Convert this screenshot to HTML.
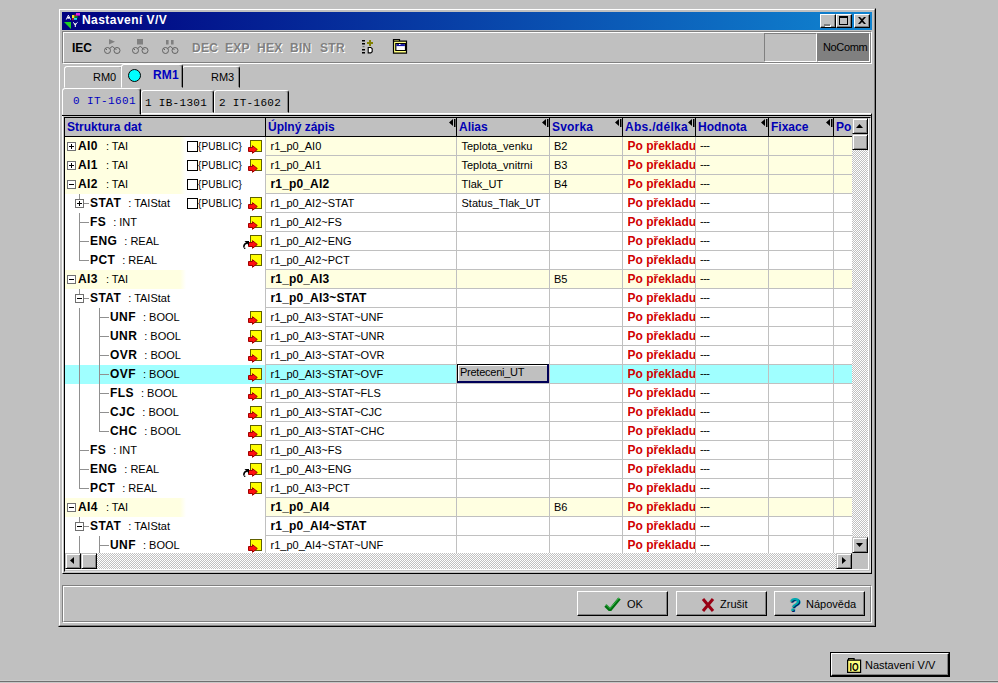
<!DOCTYPE html><html><head><meta charset="utf-8"><title>Nastavení V/V</title><style>
*{box-sizing:border-box;margin:0;padding:0}
html,body{width:998px;height:683px;overflow:hidden;background:#c0c0c0;font:11px "Liberation Sans",sans-serif;color:#000}
body{position:relative}
div,span,i,svg,b{position:absolute}
b{position:static}
#win{left:58px;top:8px;width:818px;height:619px;background:#c0c0c0;border:1px solid;border-color:#c0c0c0 #000 #000 #c0c0c0}
#win2{left:0;top:0;width:816px;height:617px;border:1px solid;border-color:#fff #808080 #808080 #fff}
#title{left:62px;top:12px;width:810px;height:18px;background:linear-gradient(90deg,#000080,#1084d0)}
#title .tt{left:20px;top:1px;font:bold 12px "Liberation Sans",sans-serif;color:#fff;letter-spacing:.45px;white-space:pre}
.capb{top:2px;width:16px;height:14px;background:#c0c0c0;border:1px solid;border-color:#fff #000 #000 #fff;box-shadow:inset -1px -1px 0 #808080}
/* toolbar */
#tb{left:62px;top:31px;width:810px;height:33px;border:1px solid;border-color:#808080 #fff #fff #808080}
#tb2{left:0;top:0;width:808px;height:31px;border:1px solid;border-color:#fff #808080 #808080 #fff}
.tbt{top:41px;font:bold 12px "Liberation Sans",sans-serif;white-space:pre;letter-spacing:.3px}
.dis{color:#808080;text-shadow:1px 1px 0 #fff}
/* tabs */
.tab{background:#c0c0c0;border:1px solid;border-color:#fff #000 transparent #fff;border-radius:3px 3px 0 0;box-shadow:inset -1px 0 0 #808080}
.tab span{white-space:pre}
/* grid */
#gridwrap{left:64px;top:117px;width:807px;height:455px;border:1px solid;border-color:#000 #dfdfdf #dfdfdf #000}
#gridwrap2{left:0;top:0;width:804px;height:452px;border:1px solid;border-color:transparent #fff #fff transparent}
#gridwrap3{left:-1px;top:-1px;width:803px;height:451px;border:1px solid;border-color:transparent #dfdfdf #dfdfdf transparent}
#grid{left:64px;top:117px;width:788px;height:436px;overflow:hidden;background:#fff}
#hdr{left:0;top:0;width:788px;height:19px;background:#c0c0c0}
#hdr .hb{top:19px;left:0;width:788px;height:1px;background:#000}
#hdr .h{top:3px;font:bold 12px "Liberation Sans",sans-serif;color:#0000b4;white-space:pre;letter-spacing:0}
#hdr .vs{top:0;width:1px;height:19px;background:#000}
#hdr .mk{top:2px;width:7px;height:8px}
.row{left:0;width:788px;height:19px;border-bottom:1px solid #c0c0c0}
.row .c0{left:0;top:0;width:201px;height:19px;background:#fff}
.row .c0y{background:linear-gradient(90deg,#ffffe1 0,#ffffe1 116px,#fff 122px)}
.row .c0s{background:#a0ffff}
.ex{z-index:2;top:5px;width:9px;height:9px;border:1px solid #707070;background:#fff}
.ex .h{left:1px;top:3px;width:5px;height:1px;background:#000}
.ex .v{left:3px;top:1px;width:1px;height:5px;background:#000}
.hl{top:9px;height:1px;background:#909090}
.vl{width:1px;background:#909090}
.nm{top:2px;white-space:pre;font:11px "Liberation Sans",sans-serif}
.nm b{font:bold 12px "Liberation Sans",sans-serif;letter-spacing:.4px}
.ty{position:static;margin-left:4px}
.cb{left:123px;top:4px;width:11px;height:11px;border:1px solid #000;background:#fff}
.pub{left:134px;top:4px;font:10px "Liberation Sans",sans-serif;letter-spacing:.15px;white-space:pre}
.ic{left:184px;top:3px;width:16px;height:14px}
.ic .sq{left:2px;top:0;width:12px;height:12px;background:#ffff00;border:1px solid #606000}
.ic .ar{left:0;top:5px}
.ic .bk{left:-5px;top:6px}
.t{top:3px;white-space:pre}
.c1{left:206.500px}.c2{left:397.500px}.c3{left:490px}.c4{left:563.500px;font:bold 12px "Liberation Sans",sans-serif;color:#d00000;top:2px;width:67.500px;overflow:hidden}.c5{left:636px;top:2px;letter-spacing:-.5px}
.fb{font:bold 12px "Liberation Sans",sans-serif;top:2px;letter-spacing:.15px}
.edit{left:393px;top:-1px;width:92px;height:19px;background:#c0c0c0;border:solid;border-width:1px 2px 2px 1px;border-color:#000 #000058 #000058 #000;box-shadow:inset 1px 1px 0 #fff;padding:1px 0 0 2px;white-space:pre;z-index:4;letter-spacing:-.25px}
.gl{top:20px;width:1px;height:416px;background:#c0c0c0}
/* scrollbars */
.chk{background-color:#fff;background-image:conic-gradient(#c0c0c0 25%,#fff 0 50%,#c0c0c0 0 75%,#fff 0);background-size:2px 2px}
.sbtn{background:#c0c0c0;border:1px solid;border-color:#c0c0c0 #000 #000 #c0c0c0;box-shadow:inset 1px 1px 0 #fff,inset -1px -1px 0 #808080}
.btn{background:#c0c0c0;border:1px solid;border-color:#fff #000 #000 #fff;box-shadow:inset -1px -1px 0 #808080}
.btn .lb{top:6px;white-space:pre;font:11px "Liberation Sans",sans-serif}

</style></head><body>
<div id="win"><div id="win2"></div></div>
<div id="title"><svg style="left:0;top:0" width="20" height="18" viewBox="0 0 20 18"><path d="M6.400 3.200L4.300 7.500M6.400 3.200L8.500 7.500" stroke="#fff" stroke-width="1" fill="none"/><path d="M5.400 5h2v1.700h-2z" fill="#fff"/><path d="M10 3h2.500v3H10z" fill="#f0f020"/><path d="M10 6h1.600v2.200H10z" fill="#d00020"/><path d="M12.500 2.500h2v1.500h-2z" fill="#c01020"/><path d="M14 1h4v2.600h-4z" fill="#e020e0"/><path d="M12.800 4h2.800v1.800h-2.800z" fill="#109010"/><path d="M11.800 6h3.200v1.800h-3.200z" fill="#20e0f0"/><path d="M2 10h7v7z" fill="#20d020"/><path d="M11 10.300l2.300 2.200 2.300-2.200M13.300 12v3" stroke="#fff" stroke-width="1" fill="none"/><path d="M12.400 11.500h1.800v1.500h-1.800z" fill="#fff"/></svg><span class="tt">Nastavení V/V</span>
<div class="capb" style="left:758px"><i style="left:3px;top:9px;width:6px;height:2px;background:#808080;box-shadow:1px 1px 0 #fff"></i></div>
<div class="capb" style="left:774px"><i style="left:2px;top:1px;width:9px;height:9px;border:1px solid #000;border-top-width:2px"></i></div>
<div class="capb" style="left:792px"><svg style="left:3px;top:2px" width="8" height="7" viewBox="0 0 8 7"><path d="M0 0h2l2 2 2-2h2L5 3.500 8 7H6L4 5 2 7H0l3-3.500z" fill="#000"/></svg></div>
</div>
<div id="tb"><div id="tb2"></div></div>
<span class="tbt" style="left:72px;letter-spacing:-.1px">IEC</span>
<span class="tbt dis" style="left:192px">DEC</span>
<span class="tbt dis" style="left:225px">EXP</span>
<span class="tbt dis" style="left:257px">HEX</span>
<span class="tbt dis" style="left:290px">BIN</span>
<span class="tbt dis" style="left:320px">STR</span>
<svg style="left:104px;top:39px" width="17" height="16" viewBox="0 0 17 16"><path d="M5 0v5.500l6-2.750z" fill="#808080"/><circle cx="3.500" cy="11.500" r="3" fill="none" stroke="#585858" stroke-width=".9"/><circle cx="13" cy="11.500" r="3" fill="none" stroke="#585858" stroke-width=".9"/><path d="M6 9.500Q8.250 5.500 10.500 9.500" fill="none" stroke="#585858" stroke-width=".9"/><path d="M1.500 9.500l1.500 1.500M11 9.500l1.500 1.500" stroke="#585858" stroke-width=".9"/></svg>
<svg style="left:132px;top:39px" width="17" height="16" viewBox="0 0 17 16"><path d="M5 0h6v5.500H5z" fill="#808080"/><circle cx="3.500" cy="11.500" r="3" fill="none" stroke="#585858" stroke-width=".9"/><circle cx="13" cy="11.500" r="3" fill="none" stroke="#585858" stroke-width=".9"/><path d="M6 9.500Q8.250 5.500 10.500 9.500" fill="none" stroke="#585858" stroke-width=".9"/><path d="M1.500 9.500l1.500 1.500M11 9.500l1.500 1.500" stroke="#585858" stroke-width=".9"/></svg>
<svg style="left:162px;top:39px" width="17" height="16" viewBox="0 0 17 16"><path d="M4 1h2.600v4.500H4zM9 1h2.600v4.500H9z" fill="#808080"/><circle cx="3.500" cy="11.500" r="3" fill="none" stroke="#585858" stroke-width=".9"/><circle cx="13" cy="11.500" r="3" fill="none" stroke="#585858" stroke-width=".9"/><path d="M6 9.500Q8.250 5.500 10.500 9.500" fill="none" stroke="#585858" stroke-width=".9"/><path d="M1.500 9.500l1.500 1.500M11 9.500l1.500 1.500" stroke="#585858" stroke-width=".9"/></svg>
<svg style="left:361px;top:40px" width="14" height="14" viewBox="0 0 14 14"><path d="M1 0h3v1.500H1zM1 3h3v1.500H1zM1 9h3v1.500H1zM1 12h3v1.500H1z" fill="#000"/><path d="M1.500 6h2v1.200h-2z" fill="#707070"/><path d="M6 3h6M9 0v6" stroke="#808000" stroke-width="2"/><path d="M7.200 7.500h2.600l1.400 1.200v3l-1.400 1.200H7.200z" fill="#fff" stroke="#000" stroke-width="1.100"/></svg>
<svg style="left:392px;top:38px" width="16" height="16" viewBox="0 0 16 16"><path d="M1.500 3.200V1.500h6v1.700" fill="#ffff80" stroke="#000" stroke-width="1.200"/><path d="M1.500 3.200h13v12h-13z" fill="#ffff80" stroke="#000" stroke-width="1.200"/><path d="M3.800 5.500h9.700v7H3.800z" fill="#fff" stroke="#000" stroke-width="1.200"/><path d="M4.400 6.100h8.500v2h-8.500z" fill="#1010a0"/><path d="M7 6.100h1.500v1H7z" fill="#fff"/></svg>
<div style="left:764px;top:33px;width:53px;height:29px;border:1px solid;border-color:#808080 #fff #fff #808080"></div>
<div style="left:817px;top:33px;width:53px;height:29px;background:#808080;border:1px solid;border-color:#808080 #fff #fff #808080"><span style="left:5px;top:7px;white-space:pre;letter-spacing:-.35px">NoComm</span></div>
<!-- RM tabs -->
<div class="tab" style="left:64px;top:66px;width:59px;height:22px"><span style="left:28px;top:4px">RM0</span></div>
<div class="tab" style="left:182px;top:66px;width:58px;height:22px"><span style="left:28px;top:4px">RM3</span></div>
<div class="tab" style="left:121px;top:64px;width:62px;height:24px"><i style="left:6px;top:4px;width:13px;height:13px;border-radius:50%;background:#00ffff;border:1px solid #000"></i><span style="left:31px;top:3px;font:bold 12px 'Liberation Sans',sans-serif;color:#0000c0;letter-spacing:.2px">RM1</span></div>
<!-- IT tabs -->
<div class="tab" style="left:141px;top:90px;width:73px;height:23px"><span style="left:3px;top:6px;font:11px 'Liberation Mono',monospace;letter-spacing:.3px">1 IB-1301</span></div>
<div class="tab" style="left:214px;top:90px;width:75px;height:23px"><span style="left:4px;top:6px;font:11px 'Liberation Mono',monospace;letter-spacing:.3px">2 IT-1602</span></div>
<div style="left:62px;top:113px;width:810px;height:461px;border:1px solid;border-color:#fff #000 #000 #fff"></div>
<div style="left:63px;top:114px;width:808px;height:1px;background:#dfdfdf"></div>
<div style="left:62px;top:115px;width:809px;height:1px;background:#000"></div>
<div class="tab" style="left:62px;top:88px;width:79px;height:27px"><span style="left:10px;top:6px;font:11px 'Liberation Mono',monospace;color:#0000c0;letter-spacing:.4px">0 IT-1601</span></div>
<div id="gridwrap"><div id="gridwrap2"><div id="gridwrap3"></div></div></div>

<div id="grid">
<div id="hdr">
<span class="h" style="left:3px">Struktura dat</span>
<span class="h" style="left:204px">Úplný zápis</span>
<span class="h" style="left:395px">Alias</span>
<span class="h" style="left:488px;letter-spacing:.2px">Svorka</span>
<span class="h" style="left:561px;letter-spacing:.3px">Abs./délka</span>
<span class="h" style="left:634px">Hodnota</span>
<span class="h" style="left:707px">Fixace</span>
<span class="h" style="left:772px">Po</span>
<i class="vs" style="left:201px"></i><i class="vs" style="left:392px"></i><i class="vs" style="left:485px"></i><i class="vs" style="left:558px"></i><i class="vs" style="left:631px"></i><i class="vs" style="left:704px"></i><i class="vs" style="left:769px"></i>
<svg class="mk" style="left:385px" viewBox="0 0 7 8"><path d="M0 3.500L4 0v7zM5 0h1.500v8H5z" fill="#000"/></svg>
<svg class="mk" style="left:478px" viewBox="0 0 7 8"><path d="M0 3.500L4 0v7zM5 0h1.500v8H5z" fill="#000"/></svg>
<svg class="mk" style="left:551px" viewBox="0 0 7 8"><path d="M0 3.500L4 0v7zM5 0h1.500v8H5z" fill="#000"/></svg>
<svg class="mk" style="left:624px" viewBox="0 0 7 8"><path d="M0 3.500L4 0v7zM5 0h1.500v8H5z" fill="#000"/></svg>
<svg class="mk" style="left:697px" viewBox="0 0 7 8"><path d="M0 3.500L4 0v7zM5 0h1.500v8H5z" fill="#000"/></svg>
<svg class="mk" style="left:762px" viewBox="0 0 7 8"><path d="M0 3.500L4 0v7zM5 0h1.500v8H5z" fill="#000"/></svg>
<i class="hb"></i><i style="left:0;top:0;width:788px;height:1px;background:#000"></i>
</div>

<div id="rows">
<div class="row" style="top:20px;background:#ffffe1">
<div class="c0 c0y"></div>
<span class="ex" style="left:3px"><i class="h"></i><i class="v"></i></span>
<span class="nm" style="left:14px"><b>AI0</b><span class="ty" style="margin-left:5px"> : TAI</span></span>
<span class="cb"></span><span class="pub">{PUBLIC}</span>
<span class="ic"><i class="sq"></i><svg class="ar" width="10" height="9" viewBox="0 0 10 9"><path d="M0.5 2.500H4.500V0.700L9.300 4.500 4.500 8.300V6.500H0.500z" fill="#ff1010" stroke="#a00000" stroke-width="1" stroke-linejoin="miter"/></svg></span>
<span class="t c1">r1_p0_AI0</span>
<span class="t c2">Teplota_venku</span>
<span class="t c3">B2</span>
<span class="t c4">Po překladu</span><span class="t c5">---</span>
</div>
<div class="row" style="top:39px;background:#ffffe1">
<div class="c0 c0y"></div>
<span class="ex" style="left:3px"><i class="h"></i><i class="v"></i></span>
<span class="nm" style="left:14px"><b>AI1</b><span class="ty" style="margin-left:5px"> : TAI</span></span>
<span class="cb"></span><span class="pub">{PUBLIC}</span>
<span class="ic"><i class="sq"></i><svg class="ar" width="10" height="9" viewBox="0 0 10 9"><path d="M0.5 2.500H4.500V0.700L9.300 4.500 4.500 8.300V6.500H0.500z" fill="#ff1010" stroke="#a00000" stroke-width="1" stroke-linejoin="miter"/></svg></span>
<span class="t c1">r1_p0_AI1</span>
<span class="t c2">Teplota_vnitrni</span>
<span class="t c3">B3</span>
<span class="t c4">Po překladu</span><span class="t c5">---</span>
</div>
<div class="row" style="top:58px;background:#ffffe1">
<div class="c0 c0y"></div>
<span class="ex" style="left:3px"><i class="h"></i></span>
<span class="nm" style="left:14px"><b>AI2</b><span class="ty" style="margin-left:5px"> : TAI</span></span>
<span class="cb"></span><span class="pub">{PUBLIC}</span>
<span class="t c1 fb">r1_p0_AI2</span>
<span class="t c2">Tlak_UT</span>
<span class="t c3">B4</span>
<span class="t c4">Po překladu</span><span class="t c5">---</span>
</div>
<div class="row" style="top:77px;background:#fff">
<div class="c0"></div>
<span class="ex" style="left:11px"><i class="h"></i><i class="v"></i></span>
<i class="hl" style="left:20px;width:5px"></i><i style="left:15px;top:14px;width:1px;height:5px;background:#fff;z-index:2"></i>
<span class="nm" style="left:26px"><b>STAT</b><span class="ty"> : TAIStat</span></span>
<span class="cb"></span><span class="pub">{PUBLIC}</span>
<span class="ic"><i class="sq"></i><svg class="ar" width="10" height="9" viewBox="0 0 10 9"><path d="M0.5 2.500H4.500V0.700L9.300 4.500 4.500 8.300V6.500H0.500z" fill="#ff1010" stroke="#a00000" stroke-width="1" stroke-linejoin="miter"/></svg></span>
<span class="t c1">r1_p0_AI2~STAT</span>
<span class="t c2">Status_Tlak_UT</span>
<span class="t c4">Po překladu</span><span class="t c5">---</span>
</div>
<div class="row" style="top:96px;background:#fff">
<div class="c0"></div>
<i class="hl" style="left:15px;width:10px"></i>
<span class="nm" style="left:26px"><b>FS</b><span class="ty"> : INT</span></span>
<span class="ic"><i class="sq"></i><svg class="ar" width="10" height="9" viewBox="0 0 10 9"><path d="M0.5 2.500H4.500V0.700L9.300 4.500 4.500 8.300V6.500H0.500z" fill="#ff1010" stroke="#a00000" stroke-width="1" stroke-linejoin="miter"/></svg></span>
<span class="t c1">r1_p0_AI2~FS</span>
<span class="t c4">Po překladu</span><span class="t c5">---</span>
</div>
<div class="row" style="top:115px;background:#fff">
<div class="c0"></div>
<i class="hl" style="left:15px;width:10px"></i>
<span class="nm" style="left:26px"><b>ENG</b><span class="ty"> : REAL</span></span>
<span class="ic"><i class="sq"></i><svg class="ar" width="10" height="9" viewBox="0 0 10 9"><path d="M0.5 2.500H4.500V0.700L9.300 4.500 4.500 8.300V6.500H0.500z" fill="#ff1010" stroke="#a00000" stroke-width="1" stroke-linejoin="miter"/></svg><svg class="bk" width="6" height="8" viewBox="0 0 6 8"><path d="M1 6.500C0.500 4 2 2.500 4 2" fill="none" stroke="#000" stroke-width="1.500"/><path d="M1.500 0H6V4.500z" fill="#000"/><circle cx="1.700" cy="7.200" r="0.800"/></svg></span>
<span class="t c1">r1_p0_AI2~ENG</span>
<span class="t c4">Po překladu</span><span class="t c5">---</span>
</div>
<div class="row" style="top:134px;background:#fff">
<div class="c0"></div>
<i class="hl" style="left:15px;width:10px"></i>
<span class="nm" style="left:26px"><b>PCT</b><span class="ty"> : REAL</span></span>
<span class="ic"><i class="sq"></i><svg class="ar" width="10" height="9" viewBox="0 0 10 9"><path d="M0.5 2.500H4.500V0.700L9.300 4.500 4.500 8.300V6.500H0.500z" fill="#ff1010" stroke="#a00000" stroke-width="1" stroke-linejoin="miter"/></svg></span>
<span class="t c1">r1_p0_AI2~PCT</span>
<span class="t c4">Po překladu</span><span class="t c5">---</span>
</div>
<div class="row" style="top:153px;background:#ffffe1">
<div class="c0 c0y"></div>
<span class="ex" style="left:3px"><i class="h"></i></span>
<span class="nm" style="left:14px"><b>AI3</b><span class="ty" style="margin-left:5px"> : TAI</span></span>
<span class="t c1 fb">r1_p0_AI3</span>
<span class="t c3">B5</span>
<span class="t c4">Po překladu</span><span class="t c5">---</span>
</div>
<div class="row" style="top:172px;background:#fff">
<div class="c0"></div>
<span class="ex" style="left:11px"><i class="h"></i></span>
<i class="hl" style="left:20px;width:5px"></i><i style="left:15px;top:14px;width:1px;height:5px;background:#fff;z-index:2"></i>
<span class="nm" style="left:26px"><b>STAT</b><span class="ty"> : TAIStat</span></span>
<span class="t c1 fb">r1_p0_AI3~STAT</span>
<span class="t c4">Po překladu</span><span class="t c5">---</span>
</div>
<div class="row" style="top:191px;background:#fff">
<div class="c0"></div>
<i class="hl" style="left:35px;width:10px"></i>
<span class="nm" style="left:46px"><b>UNF</b><span class="ty"> : BOOL</span></span>
<span class="ic"><i class="sq"></i><svg class="ar" width="10" height="9" viewBox="0 0 10 9"><path d="M0.5 2.500H4.500V0.700L9.300 4.500 4.500 8.300V6.500H0.500z" fill="#ff1010" stroke="#a00000" stroke-width="1" stroke-linejoin="miter"/></svg></span>
<span class="t c1">r1_p0_AI3~STAT~UNF</span>
<span class="t c4">Po překladu</span><span class="t c5">---</span>
</div>
<div class="row" style="top:210px;background:#fff">
<div class="c0"></div>
<i class="hl" style="left:35px;width:10px"></i>
<span class="nm" style="left:46px"><b>UNR</b><span class="ty"> : BOOL</span></span>
<span class="ic"><i class="sq"></i><svg class="ar" width="10" height="9" viewBox="0 0 10 9"><path d="M0.5 2.500H4.500V0.700L9.300 4.500 4.500 8.300V6.500H0.500z" fill="#ff1010" stroke="#a00000" stroke-width="1" stroke-linejoin="miter"/></svg></span>
<span class="t c1">r1_p0_AI3~STAT~UNR</span>
<span class="t c4">Po překladu</span><span class="t c5">---</span>
</div>
<div class="row" style="top:229px;background:#fff">
<div class="c0"></div>
<i class="hl" style="left:35px;width:10px"></i>
<span class="nm" style="left:46px"><b>OVR</b><span class="ty"> : BOOL</span></span>
<span class="ic"><i class="sq"></i><svg class="ar" width="10" height="9" viewBox="0 0 10 9"><path d="M0.5 2.500H4.500V0.700L9.300 4.500 4.500 8.300V6.500H0.500z" fill="#ff1010" stroke="#a00000" stroke-width="1" stroke-linejoin="miter"/></svg></span>
<span class="t c1">r1_p0_AI3~STAT~OVR</span>
<span class="t c4">Po překladu</span><span class="t c5">---</span>
</div>
<div class="row" style="top:248px;background:#a0ffff">
<div class="c0 c0s"></div>
<i class="hl" style="left:35px;width:10px"></i>
<span class="nm" style="left:46px"><b>OVF</b><span class="ty"> : BOOL</span></span>
<span class="ic"><i class="sq"></i><svg class="ar" width="10" height="9" viewBox="0 0 10 9"><path d="M0.5 2.500H4.500V0.700L9.300 4.500 4.500 8.300V6.500H0.500z" fill="#ff1010" stroke="#a00000" stroke-width="1" stroke-linejoin="miter"/></svg></span>
<span class="t c1">r1_p0_AI3~STAT~OVF</span>
<span class="edit">Preteceni_UT</span>
<span class="t c4">Po překladu</span><span class="t c5">---</span>
</div>
<div class="row" style="top:267px;background:#fff">
<div class="c0"></div>
<i class="hl" style="left:35px;width:10px"></i>
<span class="nm" style="left:46px"><b>FLS</b><span class="ty"> : BOOL</span></span>
<span class="ic"><i class="sq"></i><svg class="ar" width="10" height="9" viewBox="0 0 10 9"><path d="M0.5 2.500H4.500V0.700L9.300 4.500 4.500 8.300V6.500H0.500z" fill="#ff1010" stroke="#a00000" stroke-width="1" stroke-linejoin="miter"/></svg></span>
<span class="t c1">r1_p0_AI3~STAT~FLS</span>
<span class="t c4">Po překladu</span><span class="t c5">---</span>
</div>
<div class="row" style="top:286px;background:#fff">
<div class="c0"></div>
<i class="hl" style="left:35px;width:10px"></i>
<span class="nm" style="left:46px"><b>CJC</b><span class="ty"> : BOOL</span></span>
<span class="ic"><i class="sq"></i><svg class="ar" width="10" height="9" viewBox="0 0 10 9"><path d="M0.5 2.500H4.500V0.700L9.300 4.500 4.500 8.300V6.500H0.500z" fill="#ff1010" stroke="#a00000" stroke-width="1" stroke-linejoin="miter"/></svg></span>
<span class="t c1">r1_p0_AI3~STAT~CJC</span>
<span class="t c4">Po překladu</span><span class="t c5">---</span>
</div>
<div class="row" style="top:305px;background:#fff">
<div class="c0"></div>
<i class="hl" style="left:35px;width:10px"></i>
<span class="nm" style="left:46px"><b>CHC</b><span class="ty"> : BOOL</span></span>
<span class="ic"><i class="sq"></i><svg class="ar" width="10" height="9" viewBox="0 0 10 9"><path d="M0.5 2.500H4.500V0.700L9.300 4.500 4.500 8.300V6.500H0.500z" fill="#ff1010" stroke="#a00000" stroke-width="1" stroke-linejoin="miter"/></svg></span>
<span class="t c1">r1_p0_AI3~STAT~CHC</span>
<span class="t c4">Po překladu</span><span class="t c5">---</span>
</div>
<div class="row" style="top:324px;background:#fff">
<div class="c0"></div>
<i class="hl" style="left:15px;width:10px"></i>
<span class="nm" style="left:26px"><b>FS</b><span class="ty"> : INT</span></span>
<span class="ic"><i class="sq"></i><svg class="ar" width="10" height="9" viewBox="0 0 10 9"><path d="M0.5 2.500H4.500V0.700L9.300 4.500 4.500 8.300V6.500H0.500z" fill="#ff1010" stroke="#a00000" stroke-width="1" stroke-linejoin="miter"/></svg></span>
<span class="t c1">r1_p0_AI3~FS</span>
<span class="t c4">Po překladu</span><span class="t c5">---</span>
</div>
<div class="row" style="top:343px;background:#fff">
<div class="c0"></div>
<i class="hl" style="left:15px;width:10px"></i>
<span class="nm" style="left:26px"><b>ENG</b><span class="ty"> : REAL</span></span>
<span class="ic"><i class="sq"></i><svg class="ar" width="10" height="9" viewBox="0 0 10 9"><path d="M0.5 2.500H4.500V0.700L9.300 4.500 4.500 8.300V6.500H0.500z" fill="#ff1010" stroke="#a00000" stroke-width="1" stroke-linejoin="miter"/></svg><svg class="bk" width="6" height="8" viewBox="0 0 6 8"><path d="M1 6.500C0.500 4 2 2.500 4 2" fill="none" stroke="#000" stroke-width="1.500"/><path d="M1.500 0H6V4.500z" fill="#000"/><circle cx="1.700" cy="7.200" r="0.800"/></svg></span>
<span class="t c1">r1_p0_AI3~ENG</span>
<span class="t c4">Po překladu</span><span class="t c5">---</span>
</div>
<div class="row" style="top:362px;background:#fff">
<div class="c0"></div>
<i class="hl" style="left:15px;width:10px"></i>
<span class="nm" style="left:26px"><b>PCT</b><span class="ty"> : REAL</span></span>
<span class="ic"><i class="sq"></i><svg class="ar" width="10" height="9" viewBox="0 0 10 9"><path d="M0.5 2.500H4.500V0.700L9.300 4.500 4.500 8.300V6.500H0.500z" fill="#ff1010" stroke="#a00000" stroke-width="1" stroke-linejoin="miter"/></svg></span>
<span class="t c1">r1_p0_AI3~PCT</span>
<span class="t c4">Po překladu</span><span class="t c5">---</span>
</div>
<div class="row" style="top:381px;background:#ffffe1">
<div class="c0 c0y"></div>
<span class="ex" style="left:3px"><i class="h"></i></span>
<span class="nm" style="left:14px"><b>AI4</b><span class="ty" style="margin-left:5px"> : TAI</span></span>
<span class="t c1 fb">r1_p0_AI4</span>
<span class="t c3">B6</span>
<span class="t c4">Po překladu</span><span class="t c5">---</span>
</div>
<div class="row" style="top:400px;background:#fff">
<div class="c0"></div>
<span class="ex" style="left:11px"><i class="h"></i></span>
<i class="hl" style="left:20px;width:5px"></i><i style="left:15px;top:14px;width:1px;height:5px;background:#fff;z-index:2"></i>
<span class="nm" style="left:26px"><b>STAT</b><span class="ty"> : TAIStat</span></span>
<span class="t c1 fb">r1_p0_AI4~STAT</span>
<span class="t c4">Po překladu</span><span class="t c5">---</span>
</div>
<div class="row" style="top:419px;background:#fff">
<div class="c0"></div>
<i class="hl" style="left:35px;width:10px"></i>
<span class="nm" style="left:46px"><b>UNF</b><span class="ty"> : BOOL</span></span>
<span class="ic"><i class="sq"></i><svg class="ar" width="10" height="9" viewBox="0 0 10 9"><path d="M0.5 2.500H4.500V0.700L9.300 4.500 4.500 8.300V6.500H0.500z" fill="#ff1010" stroke="#a00000" stroke-width="1" stroke-linejoin="miter"/></svg></span>
<span class="t c1">r1_p0_AI4~STAT~UNF</span>
<span class="t c4">Po překladu</span><span class="t c5">---</span>
</div>
</div>
<i class="vl" style="left:15px;top:77px;height:67px"></i>
<i class="vl" style="left:15px;top:172px;height:200px"></i>
<i class="vl" style="left:35px;top:191px;height:124px"></i>
<i class="vl" style="left:15px;top:400px;height:40px"></i>
<i class="vl" style="left:35px;top:419px;height:20px"></i>

<i class="gl" style="left:201px"></i><i class="gl" style="left:392px"></i><i class="gl" style="left:485px"></i><i class="gl" style="left:558px"></i><i class="gl" style="left:631px"></i><i class="gl" style="left:704px"></i><i class="gl" style="left:769px"></i>
<i style="left:0;top:0;width:1px;height:436px;background:#000;z-index:3"></i>


</div>
<!-- vertical scrollbar -->
<div class="chk" style="left:852px;top:118px;width:16px;height:435px"></div>
<div class="sbtn" style="left:852px;top:118px;width:16px;height:16px"><svg style="left:3px;top:5px" width="7" height="4" viewBox="0 0 7 4"><path d="M0 4L3.500 0 7 4z"/></svg></div>
<div class="sbtn" style="left:852px;top:134px;width:16px;height:16px"></div>
<div class="sbtn" style="left:852px;top:537px;width:16px;height:16px"><svg style="left:3px;top:5px" width="7" height="4" viewBox="0 0 7 4"><path d="M0 0L3.500 4 7 0z"/></svg></div>
<!-- horizontal scrollbar -->
<div class="chk" style="left:65px;top:553px;width:787px;height:16px"></div>
<div class="sbtn" style="left:65px;top:553px;width:16px;height:16px"><svg style="left:4px;top:3px" width="4" height="7" viewBox="0 0 4 7"><path d="M4 0L0 3.500 4 7z"/></svg></div>
<div class="sbtn" style="left:81px;top:553px;width:16px;height:16px"></div>
<div class="sbtn" style="left:836px;top:553px;width:16px;height:16px"><svg style="left:5px;top:3px" width="4" height="7" viewBox="0 0 4 7"><path d="M0 0L4 3.500 0 7z"/></svg></div>
<div style="left:852px;top:553px;width:16px;height:16px;background:#c0c0c0"></div>
<!-- panel edge under grid -->

<!-- bottom panel -->
<div style="left:62px;top:585px;width:810px;height:38px;border:1px solid;border-color:#808080 #fff #fff #808080"><div style="left:0;top:0;width:808px;height:36px;border:1px solid;border-color:#fff #808080 #808080 #fff"></div></div>
<div class="btn" style="left:577px;top:591px;width:91px;height:25px"><svg style="left:26px;top:5px" width="17" height="14" viewBox="0 0 17 14"><path d="M1.500 8.500l4.500 4.500L15.500 1.500" fill="none" stroke="#007010" stroke-width="3.200"/><path d="M2 7.500l4 4L15 1" fill="none" stroke="#40c050" stroke-width="1"/></svg><span class="lb" style="left:49px">OK</span></div>
<div class="btn" style="left:676px;top:591px;width:91px;height:25px"><svg style="left:24px;top:6px" width="14" height="14" viewBox="0 0 14 14"><path d="M2 1l10 12M12 1L2 13" fill="none" stroke="#980014" stroke-width="3"/></svg><span class="lb" style="left:43px">Zrušit</span></div>
<div class="btn" style="left:774px;top:591px;width:91px;height:25px"><span style="left:13px;top:2px;font:bold 19px 'Liberation Sans',sans-serif;font-style:italic;color:#00a8b0;text-shadow:1px 1px 0 #002060">?</span><span class="lb" style="left:31px">Nápověda</span></div>
<!-- taskbar-like button -->
<div style="left:830px;top:652px;width:120px;height:25px;border:1px solid #000;background:#c0c0c0"><div class="btn" style="left:0;top:0;width:118px;height:23px"></div><svg style="left:16px;top:5px" width="15" height="16" viewBox="0 0 15 16"><path d="M1.600 2.200V0.700h5.500v1.500" fill="#ffff80" stroke="#000" stroke-width="1.200"/><path d="M0.600 2.200h13v12.200h-13z" fill="#ffff80" stroke="#000" stroke-width="1.200"/><text x="2.600" y="12.600" font-family="Liberation Sans" font-size="10.500" font-weight="bold" fill="#000" textLength="9" lengthAdjust="spacingAndGlyphs">IO</text></svg><span style="left:34px;top:6px;white-space:pre;font:11px 'Liberation Sans',sans-serif">Nastavení V/V</span></div>
<div style="left:0;top:680px;width:998px;height:1px;background:#ccc"></div>
<div style="left:0;top:681px;width:998px;height:1px;background:#707070"></div>
<div style="left:0;top:682px;width:998px;height:1px;background:#c8c8c8"></div>

</body></html>
